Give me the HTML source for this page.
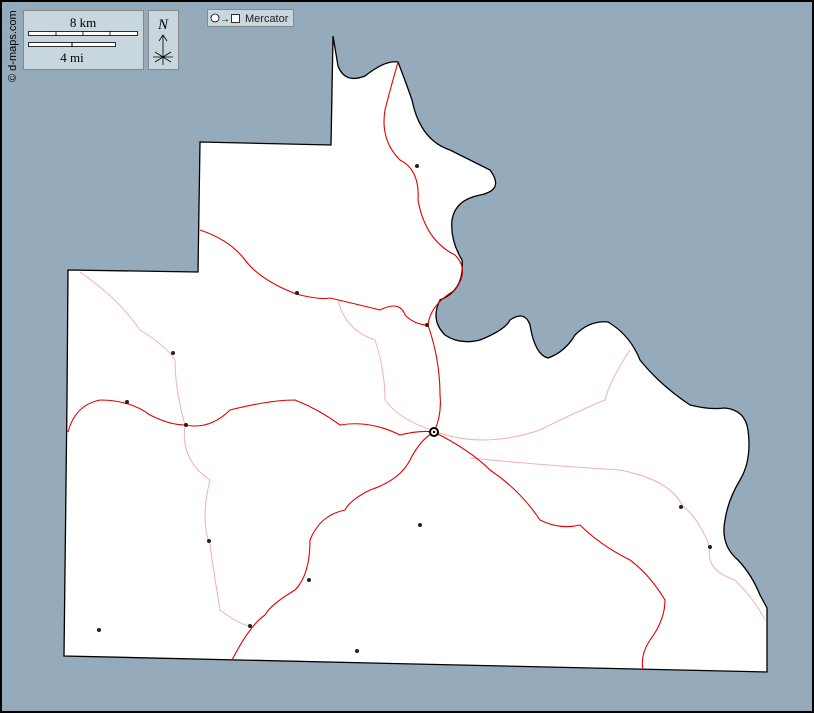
<!DOCTYPE html>
<html><head><meta charset="utf-8"><style>
html,body{margin:0;padding:0;background:#95abbb;}
svg{display:block}
</style></head><body>
<svg width="814" height="713" viewBox="0 0 814 713" xmlns="http://www.w3.org/2000/svg">
<rect x="0" y="0" width="814" height="713" fill="#95abbb"/>
<rect x="1" y="1" width="812" height="711" fill="none" stroke="#000" stroke-width="2"/>
<path d="M333,36 L338,66 Q345,84 365,76 Q385,60 398,62 Q405,80 412,100 Q420,140 450,150 Q470,160 490,170 Q505,190 480,195 Q455,200 452,220 Q450,240 462,260 Q465,290 440,300 Q430,320 445,335 Q460,345 480,340 Q505,330 510,320 Q525,310 530,325 Q535,355 548,358 Q565,352 575,335 Q590,320 608,322 Q630,335 640,360 Q660,385 690,405 Q710,410 725,408 Q745,410 748,430 Q752,460 740,480 Q728,500 725,520 Q720,545 738,560 Q752,575 760,595 L767,608 L767,672 L64,656 L67,399 L68,270 L198,272 L200,142 L331,145 Z" fill="#fff" stroke="#000" stroke-width="1.3"/>
<g fill="none" stroke="#f4b0b0" stroke-width="1">
<path d="M80,272 Q120,300 140,330 Q165,345 175,360 Q175,390 185,425"/>
<path d="M185,425 Q180,460 210,480 Q200,520 210,545 Q215,580 220,610 Q240,625 250,626"/>
<path d="M338,300 Q345,330 375,340 Q385,370 385,400 Q400,420 432,430"/>
<path d="M432,430 Q480,450 540,430 Q580,410 605,400 Q610,380 630,350"/>
<path d="M470,458 Q540,465 620,470 Q670,480 682,505 Q700,520 710,548 Q705,570 735,580 Q755,600 765,620"/>
</g>
<g fill="none" stroke="#e30000" stroke-width="1.1">
<path d="M398,62 Q390,90 385,110 Q380,140 400,160 Q420,170 418,200 Q425,240 455,255 Q470,270 455,290 Q430,305 428,325 Q440,360 440,395 Q442,415 434,432"/>
<path d="M200,230 Q230,240 245,260 Q260,280 296,294 Q320,300 330,298 Q360,305 380,310 Q400,300 405,315 Q415,325 428,325"/>
<path d="M68,432 Q75,405 100,400 Q130,400 150,415 Q170,425 185,425 Q210,430 230,410 Q270,400 295,400 Q320,410 340,425 Q370,420 400,435 Q420,430 434,432"/>
<path d="M434,432 Q420,440 410,460 Q400,480 370,490 Q350,500 345,510 Q320,515 310,540 Q310,575 295,590 Q270,605 265,615 Q250,625 232,660"/>
<path d="M434,432 Q470,450 490,470 Q520,490 540,520 Q560,530 580,525 Q600,545 630,560 Q650,575 665,600 Q665,620 650,640 Q640,655 643,670"/>
</g>
<g fill="#222">
<circle cx="417" cy="166" r="2"/><circle cx="297" cy="293" r="2"/><circle cx="427" cy="325" r="2"/>
<circle cx="173" cy="353" r="2"/><circle cx="127" cy="402" r="2"/><circle cx="186" cy="425" r="2"/>
<circle cx="420" cy="525" r="2"/><circle cx="209" cy="541" r="2"/><circle cx="309" cy="580" r="2"/>
<circle cx="250" cy="626" r="2"/><circle cx="99" cy="630" r="2"/><circle cx="357" cy="651" r="2"/>
<circle cx="681" cy="507" r="2"/><circle cx="710" cy="547" r="2"/>
</g>
<circle cx="434" cy="432" r="4" fill="#fff" stroke="#000" stroke-width="2"/>
<circle cx="434" cy="432" r="1.2" fill="#000"/>
<rect x="23.5" y="10.5" width="120" height="59" fill="#c8d6de" stroke="#888"/>
<text x="83" y="27" style="font:13px 'Liberation Serif',serif" text-anchor="middle">8 km</text>
<rect x="28.5" y="31.5" width="109" height="4" fill="#fff" stroke="#000" stroke-width="0.8"/>
<path d="M56,31v5M83,31v5M110,31v5" stroke="#000" stroke-width="0.8"/>
<rect x="28.5" y="42.5" width="87" height="4" fill="#fff" stroke="#000" stroke-width="0.8"/>
<path d="M72,42v5" stroke="#000"/>
<text x="72" y="62" style="font:13px 'Liberation Serif',serif" text-anchor="middle">4 mi</text>
<rect x="148.5" y="10.5" width="30" height="59" fill="#c8d6de" stroke="#888"/>
<text x="163" y="29" style="font:italic 15px 'Liberation Serif',serif" text-anchor="middle">N</text>
<path d="M163,35v30M159,41l4,-6l4,6M155,52l16,10M155,62l16,-10M153,57h20" stroke="#000" stroke-width="0.8" fill="none"/>
<rect x="207.5" y="9.5" width="86" height="17" fill="#c8d6de" stroke="#888"/>
<circle cx="215" cy="18" r="4" fill="#fff" stroke="#000" stroke-width="0.8"/>
<text x="220" y="22" style="font:10px 'Liberation Sans',sans-serif">→</text>
<rect x="231.5" y="14.5" width="8" height="8" fill="#fff" stroke="#000" stroke-width="0.8"/>
<text x="245" y="22" style="font:11px 'Liberation Sans',sans-serif" fill="#222">Mercator</text>
<text transform="translate(16,82) rotate(-90)" style="font:11px 'Liberation Sans',sans-serif">© d-maps.com</text>
</svg>
</body></html>
